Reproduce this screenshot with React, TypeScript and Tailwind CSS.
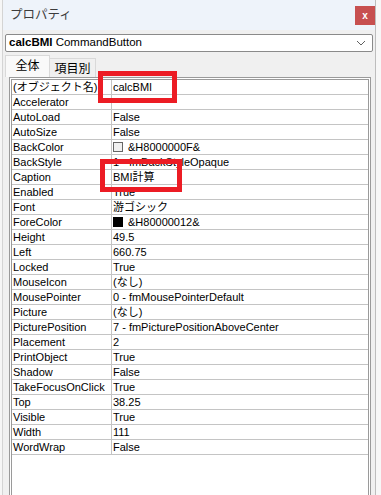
import React from 'react';

type Row = { name: string; value: string; swatch?: 'white' | 'black' };

const rows: Row[] = [
  { name: '(オブジェクト名)', value: 'calcBMI' },
  { name: 'Accelerator', value: '' },
  { name: 'AutoLoad', value: 'False' },
  { name: 'AutoSize', value: 'False' },
  { name: 'BackColor', value: '&H8000000F&', swatch: 'white' },
  { name: 'BackStyle', value: '1 - fmBackStyleOpaque' },
  { name: 'Caption', value: 'BMI計算' },
  { name: 'Enabled', value: 'True' },
  { name: 'Font', value: '游ゴシック' },
  { name: 'ForeColor', value: '&H80000012&', swatch: 'black' },
  { name: 'Height', value: '49.5' },
  { name: 'Left', value: '660.75' },
  { name: 'Locked', value: 'True' },
  { name: 'MouseIcon', value: '(なし)' },
  { name: 'MousePointer', value: '0 - fmMousePointerDefault' },
  { name: 'Picture', value: '(なし)' },
  { name: 'PicturePosition', value: '7 - fmPicturePositionAboveCenter' },
  { name: 'Placement', value: '2' },
  { name: 'PrintObject', value: 'True' },
  { name: 'Shadow', value: 'False' },
  { name: 'TakeFocusOnClick', value: 'True' },
  { name: 'Top', value: '38.25' },
  { name: 'Visible', value: 'True' },
  { name: 'Width', value: '111' },
  { name: 'WordWrap', value: 'False' },
];

const font = "font-['Liberation_Sans','Noto_Sans_CJK_JP',sans-serif]";

export default function App() {
  return (
    <div className={`relative w-[381px] h-[495px] overflow-hidden flex bg-[#f0f0f0] text-black ${font}`}>
      {/* sheet behind, left */}
      <div className="w-[3px] h-full bg-[#f6f6f6] border-r border-[#d4d4d4]" />

      {/* properties window */}
      <div className="w-[372px] h-full flex flex-col bg-[#f0f0f0]">
        {/* Title bar */}
        <div className="h-[30px] flex items-start justify-between bg-[#eef3fa]">
          <span className="pl-[7px] pt-[6px] text-[12.5px] leading-[16px] text-[#3c3c3c] font-['Noto_Sans_CJK_JP',sans-serif]">
            プロパティ
          </span>
          <div className="mt-[6px] w-[20px] h-[19px] bg-[#c75050] flex items-center justify-center text-white text-[10px] font-bold leading-none">
            x
          </div>
        </div>

        {/* Object dropdown */}
        <div className="mt-[4px] mx-[2px] h-[18px] flex items-center justify-between bg-white border border-[#8a8a8a] rounded-[2px] px-[3px]">
          <span className="text-[11.5px] leading-none whitespace-nowrap">
            <span className="font-bold">calcBMI</span> CommandButton
          </span>
          <svg width="10" height="6" viewBox="0 0 10 6" className="mr-[3px]">
            <path d="M1 1 L5 5 L9 1" fill="none" stroke="#606060" strokeWidth="1" />
          </svg>
        </div>

        {/* Tabs */}
        <div className="mt-[3px] ml-[2px] h-[22px] flex items-end">
          <div className="w-[45px] h-[22px] bg-[#f9f9f9] border border-b-0 border-[#d9d9d9] flex justify-center pt-[1px] text-[12px] leading-[16px] font-['Noto_Sans_CJK_JP',sans-serif]">
            全体
          </div>
          <div className="w-[46px] h-[19px] bg-[#f0f0f0] border border-l-0 border-b-0 border-[#d9d9d9] flex justify-center text-[12px] leading-[17px] font-['Noto_Sans_CJK_JP',sans-serif]">
            項目別
          </div>
        </div>

        {/* Property grid */}
        <div className="ml-[6px] mr-[4px] flex-1 bg-white border-[3px] border-double border-b-0 border-[#9a9a9a]">
          {rows.map((r) => (
            <div key={r.name} className="h-[15px] flex border-b border-[#c4c4c4] text-[11px] leading-[14px]">
              <div className="w-[100px] shrink-0 border-r border-[#c4c4c4] pl-[1px] whitespace-nowrap overflow-hidden">
                {r.name}
              </div>
              <div className="flex-1 flex items-center pl-[1px] whitespace-nowrap overflow-hidden">
                {r.swatch && (
                  <span
                    className={`w-[10px] h-[10px] mr-[5px] border ${
                      r.swatch === 'white' ? 'bg-[#f0f0f0] border-[#666]' : 'bg-black border-black'
                    }`}
                  />
                )}
                {r.value}
              </div>
            </div>
          ))}
        </div>
      </div>

      {/* sheet behind, right */}
      <div className="flex-1 h-full bg-[#f7f7f7] border-l border-[#bdbdbd]" />

      {/* Red highlight boxes */}
      <div className="absolute left-[98px] top-[71px] w-[79px] h-[32px] border-[5px] border-[#ec1c24]" />
      <div className="absolute left-[100px] top-[159px] w-[82px] h-[33px] border-[5px] border-[#ec1c24]" />
    </div>
  );
}
